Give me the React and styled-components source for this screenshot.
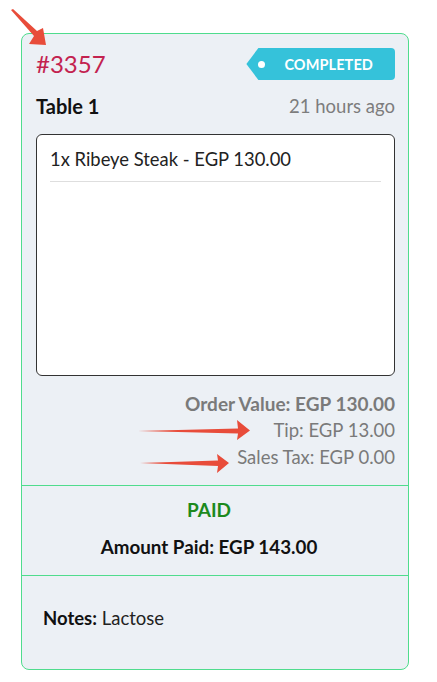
import React from "react";
import styled, { createGlobalStyle } from "styled-components";

const Global = createGlobalStyle`
  html, body { margin: 0; padding: 0; background: #ffffff; }
  body { font-family: Lato, "Open Sans", sans-serif; }
  * { box-sizing: border-box; }
`;

const Page = styled.div`
  position: relative;
  width: 437px;
  height: 682px;
  padding: 33px 0 0 21px;
`;

const Card = styled.div`
  width: 388px;
  height: 637px;
  border: 1px solid #4fdc8d;
  border-radius: 8px;
  background: #ecf0f5;
  display: flex;
  flex-direction: column;
`;

const Top = styled.div`
  padding: 14px 13px 14px 14px;
`;

const Row = styled.div`
  display: flex;
  justify-content: space-between;
  align-items: center;
  margin-top: ${(p) => p.$mt || 0}px;
`;

const OrderId = styled.div`
  color: #c3224f;
  font-size: 24px;
  line-height: 32px;
`;

const Badge = styled.div`
  position: relative;
  height: 32px;
  padding: 0 22px 0 38px;
  background: #35c2da;
  color: #fff;
  font-weight: 700;
  font-size: 14.5px;
  letter-spacing: 0.1px;
  display: flex;
  align-items: center;
  border-radius: 0 4px 4px 0;
  clip-path: polygon(12px 0, 100% 0, 100% 100%, 12px 100%, 0 50%);
  &::before {
    content: "";
    position: absolute;
    left: 12px;
    top: 50%;
    width: 7px;
    height: 7px;
    margin-top: -3.5px;
    border-radius: 50%;
    background: #fff;
  }
`;

const TableName = styled.div`
  font-weight: 700;
  font-size: 20px;
  color: #111;
`;

const TimeAgo = styled.div`
  font-size: 18.5px;
  color: #7d7d7d;
`;

const ItemsBox = styled.div`
  margin-top: 16px;
  height: 242px;
  background: #fff;
  border: 1px solid #333;
  border-radius: 6px;
  padding: 13px 13px 0 13px;
`;

const Item = styled.div`
  font-size: 18.4px;
  color: #222;
  padding-bottom: 11px;
  border-bottom: 1px solid #dedede;
`;

const Totals = styled.div`
  margin-top: 14px;
  display: flex;
  flex-direction: column;
  align-items: flex-end;
  font-size: 18.5px;
  line-height: 27px;
  color: #7a7a7a;
`;

const TotalLine = styled.div`
  font-weight: ${(p) => (p.$bold ? 700 : 400)};
  font-size: ${(p) => (p.$bold ? 19 : 18.5)}px;
`;

const Payment = styled.div`
  border-top: 1px solid #4fdc8d;
  padding: 12px 12px 17px 0;
  display: flex;
  flex-direction: column;
  align-items: center;
  gap: 14px;
`;

const PaidLabel = styled.div`
  color: #1d8a1d;
  font-weight: 700;
  font-size: 19px;
`;

const AmountPaid = styled.div`
  color: #111;
  font-weight: 700;
  font-size: 18.8px;
`;

const Notes = styled.div`
  border-top: 1px solid #4fdc8d;
  padding: 31px 21px;
  font-size: 18.5px;
  color: #222;
  b { font-weight: 700; color: #111; }
`;

const Annotation = styled.svg`
  position: absolute;
  left: 0;
  top: 0;
  width: 437px;
  height: 682px;
  pointer-events: none;
`;

export default function App() {
  return (
    <>
      <Global />
      <Page>
        <Card>
          <Top>
            <Row>
              <OrderId>#3357</OrderId>
              <Badge>COMPLETED</Badge>
            </Row>
            <Row $mt={14}>
              <TableName>Table 1</TableName>
              <TimeAgo>21 hours ago</TimeAgo>
            </Row>
            <ItemsBox>
              <Item>1x Ribeye Steak - EGP 130.00</Item>
            </ItemsBox>
            <Totals>
              <TotalLine $bold>Order Value: EGP 130.00</TotalLine>
              <TotalLine>Tip: EGP 13.00</TotalLine>
              <TotalLine>Sales Tax: EGP 0.00</TotalLine>
            </Totals>
          </Top>
          <Payment>
            <PaidLabel>PAID</PaidLabel>
            <AmountPaid>Amount Paid: EGP 143.00</AmountPaid>
          </Payment>
          <Notes>
            <b>Notes:</b> Lactose
          </Notes>
        </Card>
        <Annotation viewBox="0 0 437 682">
          <polygon points="11,10 13,9 37,31 43,28 46,45 29,44 34,36" fill="#e84c3a" />
          <polygon points="138,431 238,428.5 237,420 250,430.5 237,440 238,433.5" fill="#e84c3a" />
          <polygon points="140,463 218,460.5 217,454 229,463 217,473 218,466" fill="#e84c3a" />
        </Annotation>
      </Page>
    </>
  );
}
